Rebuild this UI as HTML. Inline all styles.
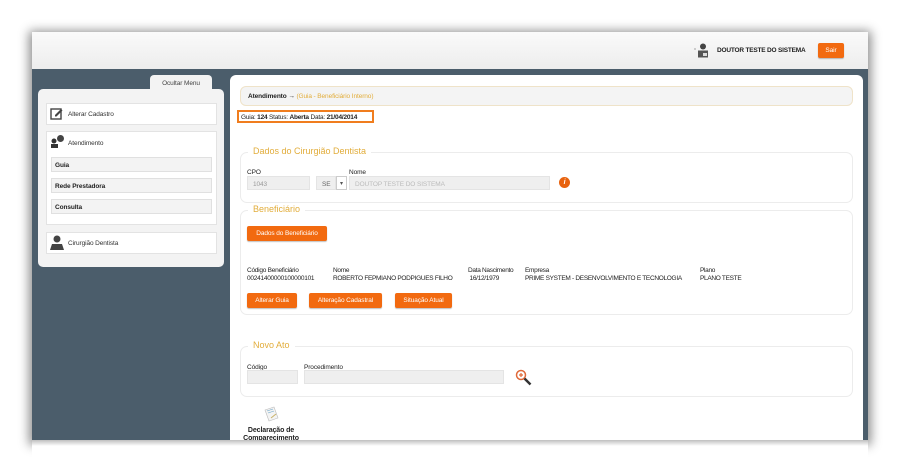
<!DOCTYPE html>
<html><head><meta charset="utf-8">
<style>
*{box-sizing:border-box;margin:0;padding:0}
body{width:901px;height:473px;background:#fff;font-family:"Liberation Sans",Arial,sans-serif;font-size:6.5px;color:#222;position:relative;overflow:hidden;letter-spacing:-0.1px}
.a{position:absolute}
.screen{left:32px;top:32px;width:836px;height:408px;background:#4b5d6b;box-shadow:0 2px 10px 3px rgba(0,0,0,.45)}
.hdr{left:32px;top:32px;width:836px;height:37px;background:linear-gradient(#fafafa,#ededed)}
.btn{background:#f26a10;color:#fff;border-radius:2px;font-size:6.5px;text-align:center;box-shadow:0 1px 1px rgba(0,0,0,.25)}
.panel{background:#fff;border-radius:5px}
.mi{background:#fff;border:1px solid #e3e3e3;left:46px;width:171px}
.sub{left:51px;width:161px;height:15px;background:#f3f3f3;border:1px solid #e0e0e0;font-weight:bold;font-size:6.5px;padding:4px 0 0 3px}
.fs{left:240px;width:613px;border:1px solid #ececec;border-radius:7px;background:#fff}
.lg{font-size:9px;color:#e2ad3b;background:#fff;padding:0 5px;letter-spacing:0}
.inp{background:#efefef;border:1px solid #e4e4e4;color:#999;font-size:6.5px;padding:4px 0 0 5px}
</style></head><body>
<div class="a screen"></div>
<div class="a hdr"></div>
<svg class="a" style="left:694px;top:43px" width="16" height="15" viewBox="0 0 16 15"><circle cx="1" cy="6" r=".6" fill="#666"/><circle cx="9" cy="3.5" r="3" fill="#444"/><rect x="4" y="7.5" width="10" height="7" fill="#555"/><rect x="9" y="10" width="4" height="3" fill="#ddd"/></svg>
<div class="a" style="left:717px;top:47px;font-weight:bold;font-size:6.5px;letter-spacing:-0.2px">DOUTOR TESTE DO SISTEMA</div>
<div class="a btn" style="left:818px;top:43px;width:26px;height:15px;padding-top:4px">Sair</div>

<div class="a" style="left:150px;top:75px;width:62px;height:15px;background:#f3f3f3;border-radius:4px 4px 0 0;color:#444;text-align:center;padding-top:5px">Ocultar Menu</div>
<div class="a panel" style="left:38px;top:89px;width:186px;height:178px;background:#f3f3f3"></div>
<div class="a mi" style="top:103px;height:22px"></div>
<svg class="a" style="left:50px;top:107px" width="14" height="13" viewBox="0 0 14 13"><rect x="1" y="2" width="10" height="10" fill="none" stroke="#444" stroke-width="1.4"/><path d="M5 8l6-6 1.5 1.5-6 6H5z" fill="#444"/></svg>
<div class="a" style="left:68px;top:111px;color:#333">Alterar Cadastro</div>
<div class="a mi" style="top:131px;height:94px"></div>
<svg class="a" style="left:50px;top:135px" width="15" height="13" viewBox="0 0 15 13"><circle cx="10.5" cy="3.5" r="3.5" fill="#444"/><circle cx="4" cy="6" r="2.5" fill="#333"/><rect x="1" y="9" width="7" height="4" fill="#333"/></svg>
<div class="a" style="left:68px;top:140px;color:#333">Atendimento</div>
<div class="a sub" style="top:157px">Guia</div>
<div class="a sub" style="top:178px">Rede Prestadora</div>
<div class="a sub" style="top:199px">Consulta</div>
<div class="a mi" style="top:232px;height:22px"></div>
<svg class="a" style="left:50px;top:235px" width="14" height="15" viewBox="0 0 14 15"><circle cx="7" cy="4" r="3.5" fill="#444"/><path d="M0 15l2-6h10l2 6z" fill="#444"/></svg>
<div class="a" style="left:68px;top:240px;color:#333">Cirurgião Dentista</div>

<div class="a panel" style="left:230px;top:75px;width:633px;height:375px;border-radius:6px 6px 0 0"></div>
<div class="a" style="left:240px;top:86px;width:613px;height:20px;background:#f4f4f4;border:1px solid #efe3c9;border-radius:6px;padding:6px 0 0 7px"><b>Atendimento</b> → <span style="color:#e2ad3b">(Guia - Beneficiário Interno)</span></div>
<div class="a" style="left:237px;top:110px;width:137px;height:13px;border:2px solid #f07d1e;padding:2px 0 0 2px;white-space:nowrap;letter-spacing:-0.2px">Guia: <b>124</b> Status: <b>Aberta</b> Data: <b>21/04/2014</b></div>

<div class="a fs" style="top:152px;height:51px"></div>
<div class="a lg" style="left:248px;top:146px">Dados do Cirurgião Dentista</div>
<div class="a" style="left:247px;top:169px">CPO</div>
<div class="a inp" style="left:247px;top:176px;width:63px;height:14px">1043</div>
<div class="a inp" style="left:316px;top:176px;width:20px;height:14px;color:#666">SE</div>
<div class="a" style="left:336px;top:176px;width:11px;height:14px;border:1px solid #ccc;background:#fff;font-size:6px;text-align:center;padding-top:3px;color:#555">▾</div>
<div class="a" style="left:349px;top:169px">Nome</div>
<div class="a inp" style="left:349px;top:176px;width:201px;height:14px;color:#bbb">DOUTOP TESTE DO SISTEMA</div>
<div class="a" style="left:559px;top:177px;width:11px;height:11px;border-radius:50%;background:#e8620e;color:#fff;font-size:7px;font-weight:bold;text-align:center;line-height:11px;font-style:italic">i</div>

<div class="a fs" style="top:210px;height:105px"></div>
<div class="a lg" style="left:248px;top:204px">Beneficiário</div>
<div class="a btn" style="left:247px;top:226px;width:80px;height:15px;padding-top:4px">Dados do Beneficiário</div>
<div class="a" style="left:247px;top:267px;line-height:8px;letter-spacing:-0.25px">Código Beneficiário<br>00241400000100000101</div>
<div class="a" style="left:333px;top:267px;line-height:8px;letter-spacing:-0.3px">Nome<br>ROBERTO FEPMIANO PODPIGUES FILHO</div>
<div class="a" style="left:468px;top:267px;line-height:8px;letter-spacing:-0.3px">Data Nascimento<br>&nbsp;16/12/1979</div>
<div class="a" style="left:525px;top:267px;line-height:8px;letter-spacing:-0.3px">Empresa<br>PRIME SYSTEM - DESENVOLVIMENTO E TECNOLOGIA</div>
<div class="a" style="left:700px;top:267px;line-height:8px;letter-spacing:-0.3px">Plano<br>PLANO TESTE</div>
<div class="a btn" style="left:247px;top:293px;width:50px;height:15px;padding-top:4px">Alterar Guia</div>
<div class="a btn" style="left:309px;top:293px;width:73px;height:15px;padding-top:4px">Alteração Cadastral</div>
<div class="a btn" style="left:395px;top:293px;width:57px;height:15px;padding-top:4px">Situação Atual</div>

<div class="a fs" style="top:346px;height:51px"></div>
<div class="a lg" style="left:248px;top:340px">Novo Ato</div>
<div class="a" style="left:247px;top:364px">Código</div>
<div class="a inp" style="left:247px;top:370px;width:51px;height:14px"></div>
<div class="a" style="left:304px;top:364px">Procedimento</div>
<div class="a inp" style="left:304px;top:370px;width:200px;height:14px"></div>
<svg class="a" style="left:515px;top:369px" width="17" height="17" viewBox="0 0 17 17"><circle cx="6" cy="6" r="4.5" fill="#fff" stroke="#e06a3a" stroke-width="1.5"/><path d="M4 6h4M6 4v4" stroke="#e06a3a" stroke-width="1.2"/><path d="M9.5 9.5l6 6" stroke="#333" stroke-width="2.5"/></svg>

<svg class="a" style="left:262px;top:406px" width="18" height="17" viewBox="0 0 18 17"><path d="M3 4l9-3 4 11-9 3z" fill="#f4f4f4" stroke="#bbb" stroke-width=".6"/><path d="M5 5l6-2M6 7l6-2" stroke="#6aa5c9" stroke-width=".6"/><path d="M9 12l5-4" stroke="#c9b36a" stroke-width="1"/></svg>
<div class="a" style="left:236px;top:427px;width:70px;text-align:center;font-weight:bold;font-size:7px;line-height:8px">Declaração de<br>Comparecimento</div>
<div class="a" style="left:32px;top:440px;width:836px;height:33px;background:#fff"></div>
<div class="a" style="left:32px;top:440px;width:836px;height:6px;background:linear-gradient(rgba(0,0,0,.25),rgba(0,0,0,0))"></div>
</body></html>
